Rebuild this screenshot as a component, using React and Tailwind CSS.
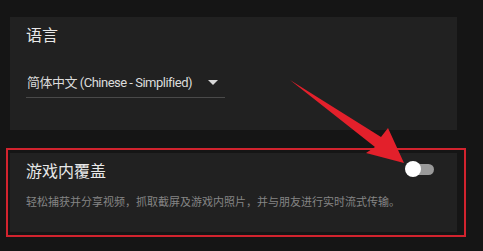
import React from "react";

export default function App() {
  return (
    <div
      className="relative w-[483px] h-[251px] overflow-hidden bg-[#151515] pt-[17px]"
      style={{ fontFamily: "Roboto, 'Noto Sans CJK SC', sans-serif" }}
    >
      <div className="ml-[10px] w-[447px] h-[113px] bg-[#212121] pl-[16px] pt-[7px]">
        <div className="text-[16px] leading-[24px] text-[#e8e8e8]">语言</div>
        <div className="mt-[20px] w-[199px] h-[30px] border-b border-[#4a4a4a] flex items-center pl-[1px]">
          <span className="text-[13px] leading-[20px] text-[#dcdcdc] tracking-[-0.5px]">
            简体中文 (Chinese - Simplified)
          </span>
          <span className="ml-auto mr-[7px] w-0 h-0 border-l-[5px] border-r-[5px] border-t-[5px] border-l-transparent border-r-transparent border-t-[#d8d8d8]" />
        </div>
      </div>

      <div className="ml-[6px] mt-[18px] w-[460px] h-[89px] border-2 border-[#d2232e] pl-[2px] pt-[3px]">
        <div className="w-[447px] h-[79px] bg-[#212121] pl-[16px] pt-[7px] flex">
          <div className="flex-1">
            <div className="text-[16px] leading-[24px] text-[#e8e8e8]">游戏内覆盖</div>
            <div className="mt-[11px] text-[11px] leading-[16px] text-[#858585]">
              轻松捕获并分享视频，抓取截屏及游戏内照片，并与朋友进行实时流式传输。
            </div>
          </div>
          <div className="relative w-[30px] h-[16px] mt-[1px] mr-[22px] flex items-center">
            <div className="absolute left-[5px] w-[24px] h-[11px] rounded-full bg-[#9a9a9a]" />
            <div className="absolute left-0 w-[16px] h-[16px] rounded-full bg-white" />
          </div>
        </div>
      </div>

      <svg
        className="absolute left-0 top-0 pointer-events-none"
        width="483"
        height="251"
        viewBox="0 0 483 251"
      >
        <polygon
          points="290,80 381,137 388,128 404,163 366,153 375,147"
          fill="#e3202b"
        />
      </svg>
    </div>
  );
}
